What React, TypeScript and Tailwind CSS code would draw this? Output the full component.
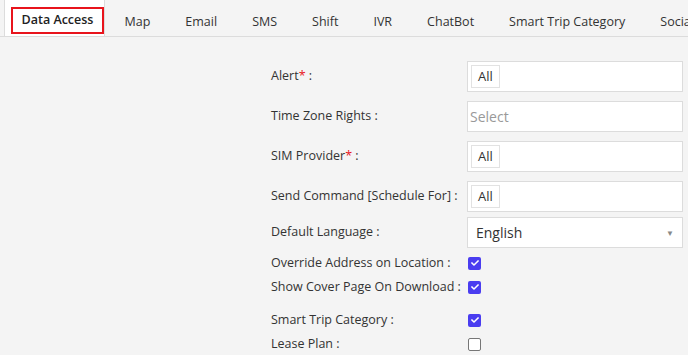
import { FaCheck } from "react-icons/fa";

const tabs = ["Map", "Email", "SMS", "Shift", "IVR", "ChatBot", "Smart Trip Category", "Social"];

const Chip = () => (
  <span className="ml-[3px] flex h-[23px] items-center border border-[#e2e2e2] px-[6px] text-[13px] text-[#333]">
    All
  </span>
);

const Check = ({ on }: { on: boolean }) =>
  on ? (
    <span className="flex h-[13px] w-[13px] items-center justify-center rounded-[2px] bg-[#4a3df0]">
      <FaCheck size={8} className="text-white" />
    </span>
  ) : (
    <span className="h-[13px] w-[13px] rounded-[2px] border border-[#767676] bg-white" />
  );

const App = () => {
  return (
    <div
      className="h-[355px] w-[688px] overflow-hidden whitespace-nowrap bg-[#f4f4f4] text-[#333]"
      style={{ fontFamily: '"Open Sans", sans-serif' }}
    >
      <div className="flex h-[37px] items-stretch border-b border-[#dcdcdc] pl-[4px] text-[12.5px]">
        <div className="flex w-[104px] items-center border-x border-[#dcdcdc] bg-white pl-[6px] pt-[5px]">
          <span className="flex h-[27px] w-[93px] items-center justify-center border-2 border-[#e8141c] font-semibold text-[#222]">
            Data Access
          </span>
        </div>
        <div className="flex pl-[2px] pt-[9px]">
          {tabs.map((t) => (
            <div key={t} className="flex items-center px-[17.5px] text-[#333]">
              {t}
            </div>
          ))}
        </div>
      </div>

      <div className="grid grid-cols-[196px_216px] items-center pl-[271px] pt-[24px] text-[12.5px]">
        <div>
          Alert<span className="text-[#e8141c]">*</span> :
        </div>
        <div className="flex h-[31px] items-center border border-[#dcdcdc] bg-white">
          <Chip />
        </div>

        <div className="mt-[9px]">Time Zone Rights :</div>
        <div className="mt-[9px] flex h-[31px] items-center border border-[#dcdcdc] bg-white pl-[2px] text-[14px] text-[#999]">
          Select
        </div>

        <div className="mt-[9px]">
          SIM Provider<span className="text-[#e8141c]">*</span> :
        </div>
        <div className="mt-[9px] flex h-[31px] items-center border border-[#dcdcdc] bg-white">
          <Chip />
        </div>

        <div className="mt-[9px]">Send Command [Schedule For] :</div>
        <div className="mt-[9px] flex h-[31px] items-center border border-[#dcdcdc] bg-white">
          <Chip />
        </div>

        <div className="mt-[5px]">Default Language :</div>
        <div className="mt-[5px] flex h-[31px] items-center justify-between border border-[#dcdcdc] bg-white pl-[8px] pr-[8px] text-[14px]">
          English
          <span className="text-[8px] text-[#888]">▼</span>
        </div>

        <div className="mt-[3px] leading-[24px]">Override Address on Location :</div>
        <div className="mt-[3px] flex h-[24px] items-center pl-[1px]">
          <Check on />
        </div>

        <div className="leading-[24px]">Show Cover Page On Download :</div>
        <div className="flex h-[24px] items-center pl-[1px]">
          <Check on />
        </div>

        <div className="mt-[9px] leading-[24px]">Smart Trip Category :</div>
        <div className="mt-[9px] flex h-[24px] items-center pl-[1px]">
          <Check on />
        </div>

        <div className="leading-[24px]">Lease Plan :</div>
        <div className="flex h-[24px] items-center pl-[1px]">
          <Check on={false} />
        </div>
      </div>
    </div>
  );
};

export default App;
